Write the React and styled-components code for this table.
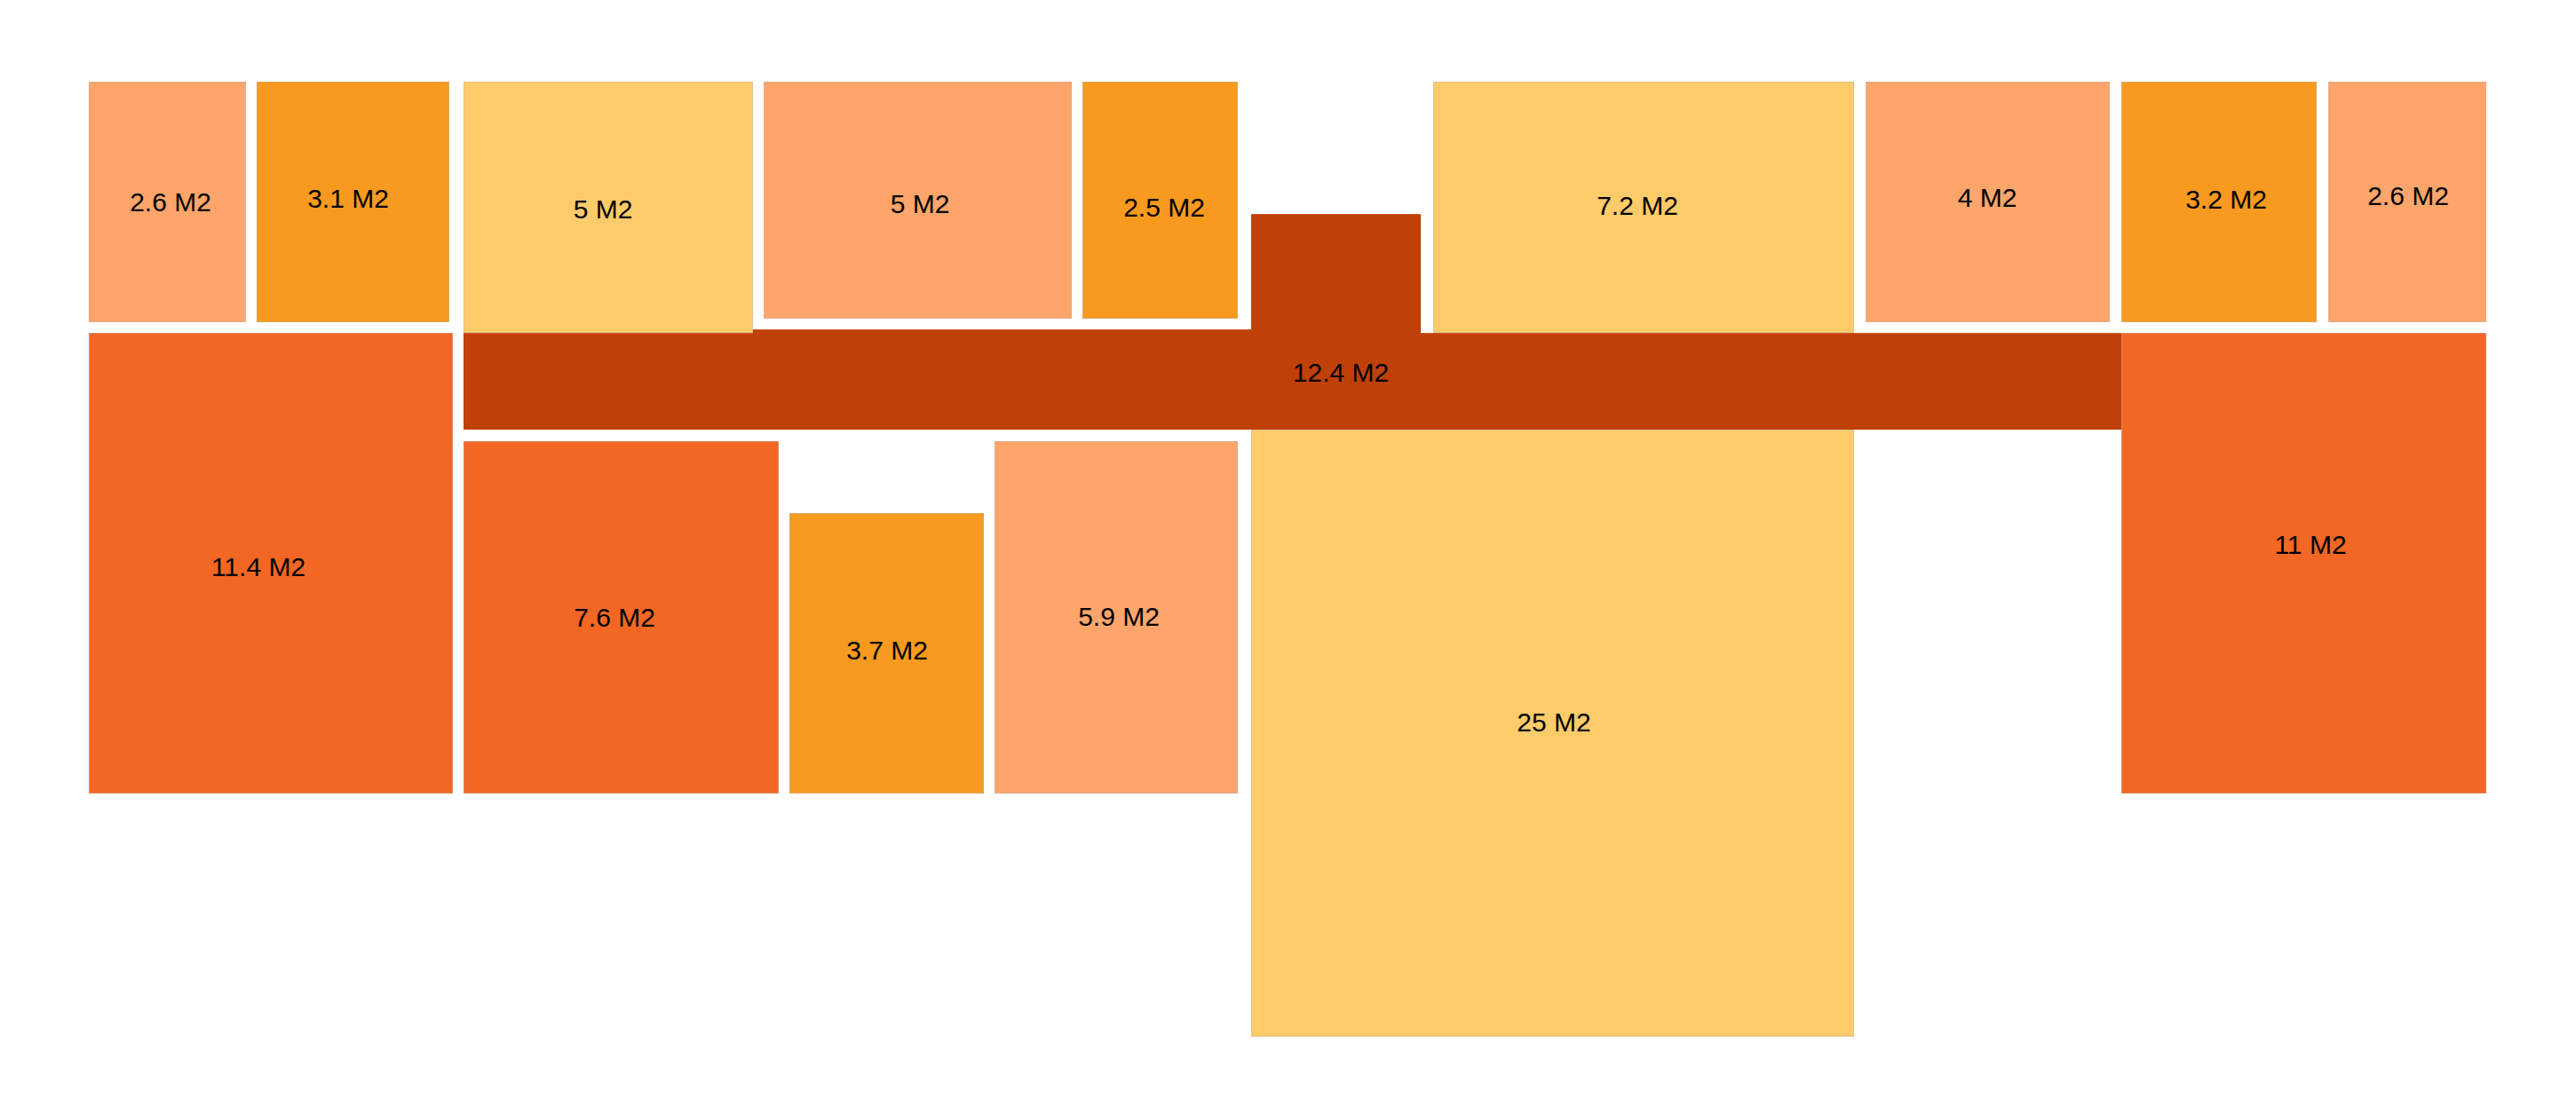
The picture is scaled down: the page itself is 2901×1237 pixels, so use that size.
import React from 'react'
import styled, { createGlobalStyle } from 'styled-components'

const GlobalStyle = createGlobalStyle`
  html, body {
    margin: 0;
    padding: 0;
    background: #ffffff;
  }
  body {
    font-family: 'Liberation Sans', Arial, sans-serif;
  }
`

const COLOURS = {
  salmon: '#fda56b',
  orange: '#f89a1f',
  yellow: '#fdcb6a',
  hall: '#bf4008',
  red: '#f26724',
}

// rooms of the plan: [x1, y1, x2, y2], label centre [lx, ly]
const rooms = [
  { area: '2.6', tone: 'salmon', box: [100, 92, 277, 363], at: [192, 228] },
  { area: '3.1', tone: 'orange', box: [289, 92, 506, 363], at: [392, 224] },
  { area: '5', tone: 'yellow', box: [522, 92, 848, 375], at: [679, 236] },
  { area: '5', tone: 'salmon', box: [860, 92, 1207, 359], at: [1036, 230] },
  { area: '2.5', tone: 'orange', box: [1219, 92, 1394, 359], at: [1311, 234] },
  { area: '7.2', tone: 'yellow', box: [1614, 92, 2088, 375], at: [1844, 232] },
  { area: '4', tone: 'salmon', box: [2101, 92, 2376, 363], at: [2238, 223] },
  { area: '3.2', tone: 'orange', box: [2389, 92, 2609, 363], at: [2507, 225] },
  { area: '2.6', tone: 'salmon', box: [2622, 92, 2800, 363], at: [2712, 221] },
  { area: '11.4', tone: 'red', box: [100, 375, 510, 894], at: [291, 639] },
  { area: '7.6', tone: 'red', box: [522, 497, 877, 894], at: [692, 696] },
  { area: '3.7', tone: 'orange', box: [889, 578, 1108, 894], at: [999, 733] },
  { area: '5.9', tone: 'salmon', box: [1120, 497, 1394, 894], at: [1260, 695] },
  { area: '25', tone: 'yellow', box: [1409, 484, 2088, 1168], at: [1750, 814] },
  { area: '11', tone: 'red', box: [2389, 375, 2800, 894], at: [2602, 614] },
]

// the hall is one room drawn from three parts
const hall = {
  area: '12.4',
  parts: [
    [522, 375, 2389, 484],
    [848, 371, 1409, 376],
    [1409, 241, 1600, 376],
  ],
  at: [1510, 420],
}

const Plan = styled('div')`
  position: relative;
  width: 2901px;
  height: 1237px;
  overflow: hidden;
  background: #fff;
`

const Room = styled('div')`
  position: absolute;
  box-sizing: border-box;
  left: ${(p) => p.$box[0]}px;
  top: ${(p) => p.$box[1]}px;
  width: ${(p) => p.$box[2] - p.$box[0]}px;
  height: ${(p) => p.$box[3] - p.$box[1]}px;
  background: ${(p) => COLOURS[p.$tone]};
  border: 1px solid rgba(185, 185, 185, 0.45);
`

const HallPart = styled('div')`
  position: absolute;
  box-sizing: border-box;
  left: ${(p) => p.$box[0]}px;
  top: ${(p) => p.$box[1]}px;
  width: ${(p) => p.$box[2] - p.$box[0]}px;
  height: ${(p) => p.$box[3] - p.$box[1]}px;
  background: ${COLOURS.hall};
  border-top: 1px solid rgba(230, 120, 70, 0.5);
`

const Label = styled('span')`
  position: absolute;
  left: ${(p) => p.$at[0]}px;
  top: ${(p) => p.$at[1]}px;
  transform: translate(-50%, -50%);
  white-space: nowrap;
  font-family: 'Liberation Sans', Arial, sans-serif;
  font-size: 30px;
  line-height: 1.15;
  color: #000;
  pointer-events: none;
`

const App = () => (
  <>
    <GlobalStyle />
    <Plan>
      {rooms.map((r, i) => (
        <Room key={i} $tone={r.tone} $box={r.box} />
      ))}
      {hall.parts.map((b, i) => (
        <HallPart key={i} $box={b} />
      ))}
      {rooms.map((r, i) => (
        <Label key={i} $at={r.at}>
          {r.area} M2
        </Label>
      ))}
      <Label $at={hall.at}>{hall.area} M2</Label>
    </Plan>
  </>
)

export default App
